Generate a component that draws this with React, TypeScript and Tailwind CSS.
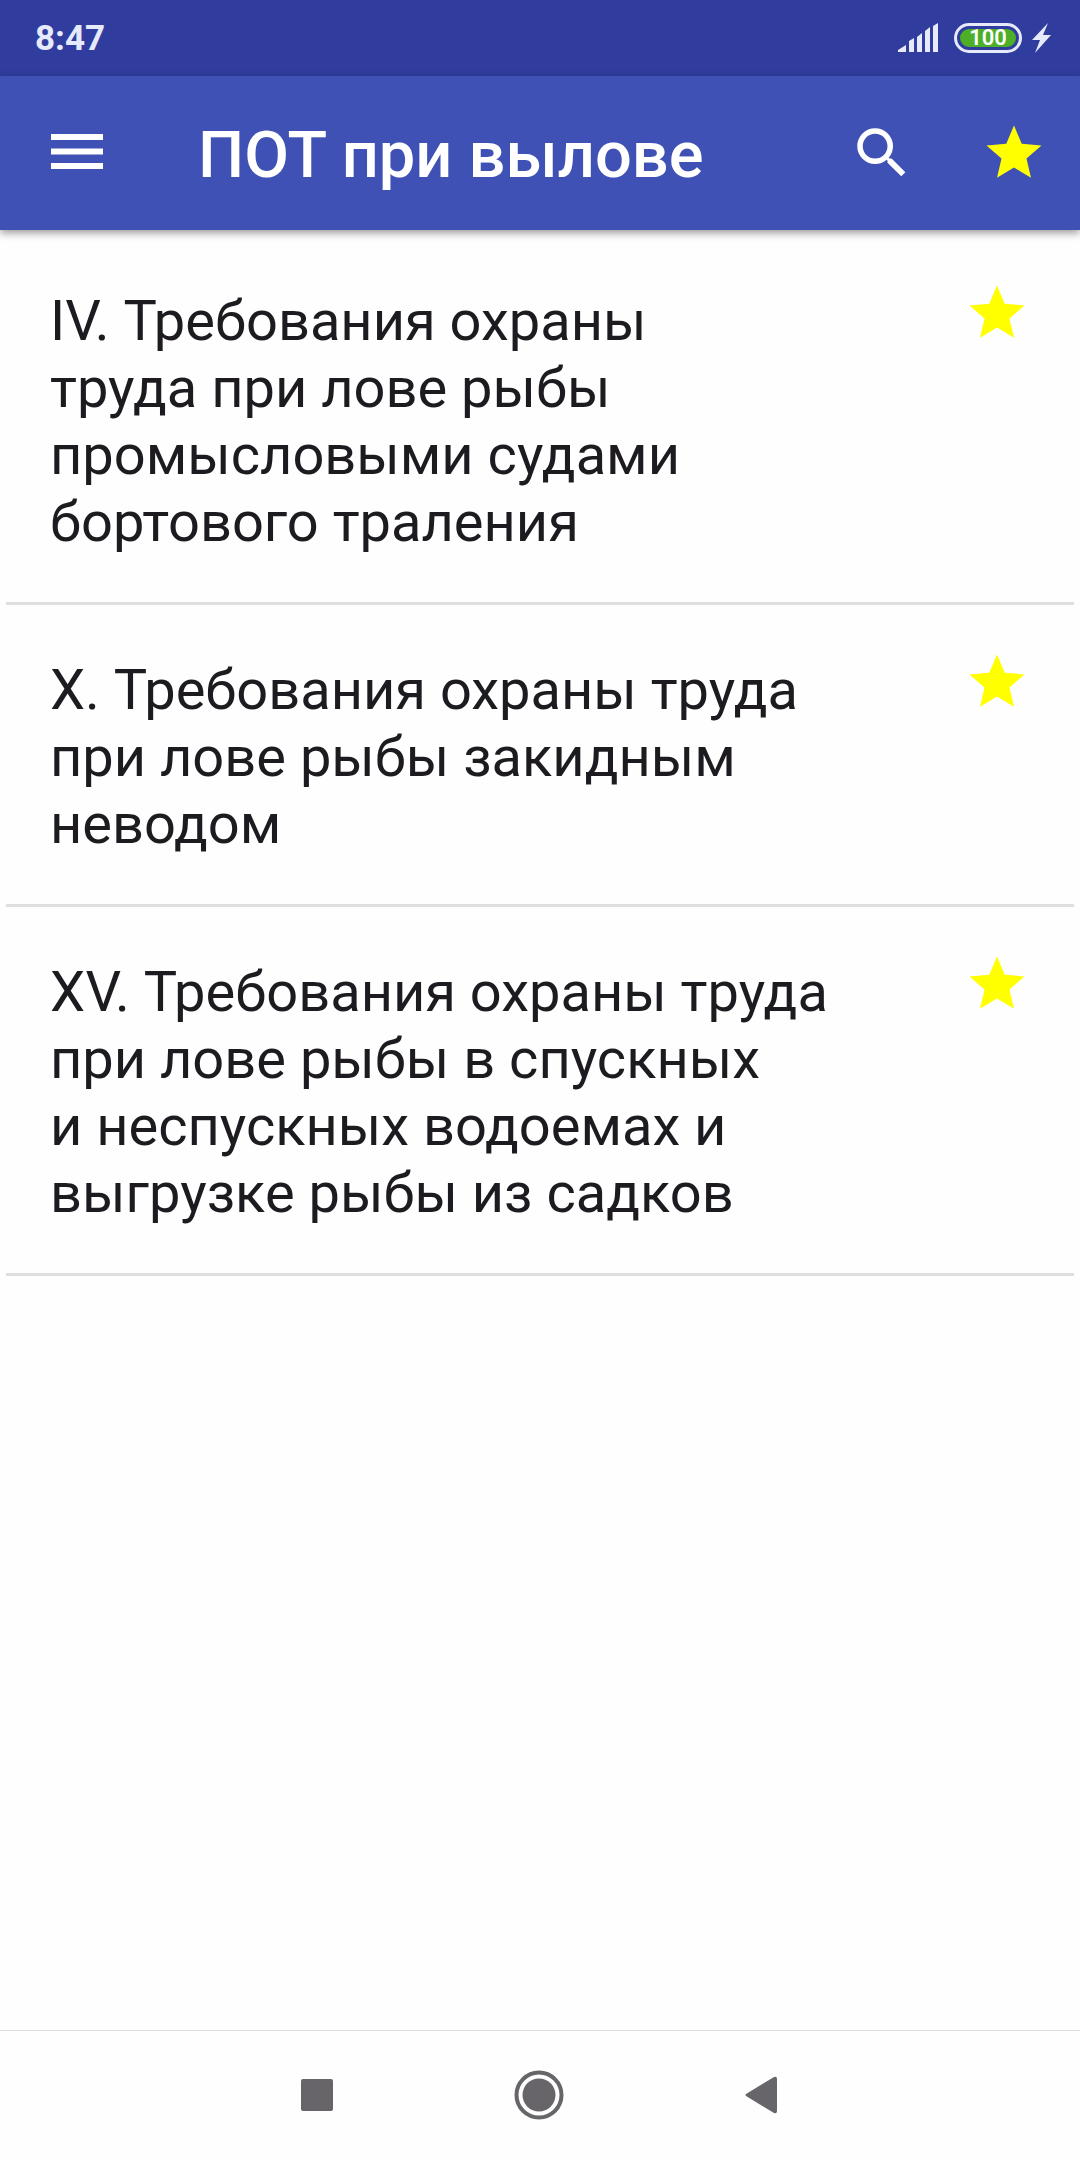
import type { ReactNode } from 'react'

const topics = [
    {
        id: 4,
        lines: ['IV. Требования охраны', 'труда при лове рыбы', 'промысловыми судами', 'бортового траления'],
    },
    {
        id: 10,
        lines: ['X. Требования охраны труда', 'при лове рыбы закидным', 'неводом'],
    },
    {
        id: 15,
        lines: [
            'XV. Требования охраны труда',
            'при лове рыбы в спускных',
            'и неспускных водоемах и',
            'выгрузке рыбы из садков',
        ],
    },
]

interface IconButtonProps {
    label: string
    className?: string
    children: ReactNode
}

function IconButton({ label, className = '', children }: IconButtonProps) {
    return (
        <button type="button" aria-label={label} className={`flex shrink-0 items-center justify-center ${className}`}>
            {children}
        </button>
    )
}

function StarIcon() {
    return (
        <svg viewBox="0 0 24 24" className="size-[66px] fill-[#ffff00]" aria-hidden="true">
            <path d="M12 17.27L18.18 21l-1.64-7.03L22 9.24l-7.19-.61L12 2 9.19 8.63 2 9.24l5.46 4.73L5.82 21z" />
        </svg>
    )
}

function StatusBar() {
    return (
        <div className="flex h-[76px] items-center justify-between bg-[#303d9e] pr-[29px] pl-[35px] text-[#e6eafb]">
            <span className="pt-0.5 text-[35px] leading-10 font-bold">8:47</span>
            <div className="flex items-center">
                <svg viewBox="0 0 41 30" className="mr-4 h-[30px] w-[41px] fill-current" aria-hidden="true">
                    <path d="M1 29v-2l8-5v7zM12 29V18l5-3v14zM20 29V14l5-4v19zM28 29V8l5-4v25zM36 29V3l5-3v29z" />
                </svg>
                <div className="mr-2.5 flex h-[30px] w-[68px] rounded-full border-3 border-current p-[3px]">
                    <span className="flex flex-1 items-center justify-center rounded-full bg-[#4caf27] text-[22px] leading-none font-semibold text-white">
                        100
                    </span>
                </div>
                <svg viewBox="0 0 19 30" className="h-[30px] w-[19px] fill-current" aria-hidden="true">
                    <path d="M16 0L0 17h8L3 30l16-18h-8z" />
                </svg>
            </div>
        </div>
    )
}

function Toolbar() {
    return (
        <header className="relative flex h-[154px] items-center bg-[#3f51b5] pr-[33px] pl-11 text-white shadow-[0_3px_8px_rgba(0,0,0,0.4)]">
            <IconButton label="Меню">
                <svg viewBox="0 0 66 66" className="size-[66px] fill-current" aria-hidden="true">
                    <path d="M7 14h52v6H7zm0 14.5h52v6H7zm0 14.5h52v6H7z" />
                </svg>
            </IconButton>
            <h1 className="ml-[88px] flex-1 pt-1 text-[65px] leading-[74px] font-medium">ПОТ при вылове</h1>
            <IconButton label="Поиск" className="mr-[66px]">
                <svg viewBox="0 0 24 24" className="size-[66px] fill-current" aria-hidden="true">
                    <path d="M15.5 14h-.79l-.28-.27A6.47 6.47 0 0 0 16 9.5 6.5 6.5 0 1 0 9.5 16c1.61 0 3.09-.59 4.23-1.57l.27.28v.79l5 4.99L20.49 19zm-6 0C7.01 14 5 11.99 5 9.5S7.01 5 9.5 5 14 7.01 14 9.5 11.99 14 9.5 14z" />
                </svg>
            </IconButton>
            <IconButton label="Избранное">
                <StarIcon />
            </IconButton>
        </header>
    )
}

function NavBar() {
    return (
        <nav className="flex h-[130px] items-center justify-center gap-[156px] border-t border-[#dedede] pr-0.5 pb-0.5 text-[#676569]">
            <IconButton label="Недавние" className="size-[66px]">
                <span className="size-8 rounded-xs bg-current" />
            </IconButton>
            <IconButton label="Домой" className="size-[66px]">
                <svg viewBox="0 0 50 50" className="size-[50px] fill-current" aria-hidden="true">
                    <circle cx="25" cy="25" r="22.5" fill="none" stroke="currentColor" strokeWidth="4" />
                    <circle cx="25" cy="25" r="16.5" />
                </svg>
            </IconButton>
            <IconButton label="Назад" className="size-[66px]">
                <svg viewBox="0 0 32 38" className="h-[38px] w-8 fill-current" aria-hidden="true">
                    <path d="M1 18L29 1q3-1 3 2v32q0 3-3 2L1 20q-1-1 0-2z" />
                </svg>
            </IconButton>
        </nav>
    )
}

export default function App() {
    return (
        <div className="flex min-h-screen flex-col bg-[#fefefe] font-[Roboto,sans-serif]">
            <StatusBar />
            <Toolbar />
            <main className="flex-1 p-1.5">
                <ul>
                    {topics.map((topic) => (
                        <li
                            key={topic.id}
                            className="flex items-start justify-between border-b-3 border-[#dfdee0] px-11 pt-11 pb-[46px]"
                        >
                            <p className="pt-2 text-[56px] leading-[67px] text-[#1d1b20]">
                                {topic.lines.map((line) => (
                                    <span key={line} className="block">
                                        {line}
                                    </span>
                                ))}
                            </p>
                            <IconButton label="Убрать из избранного">
                                <StarIcon />
                            </IconButton>
                        </li>
                    ))}
                </ul>
            </main>
            <NavBar />
        </div>
    )
}
